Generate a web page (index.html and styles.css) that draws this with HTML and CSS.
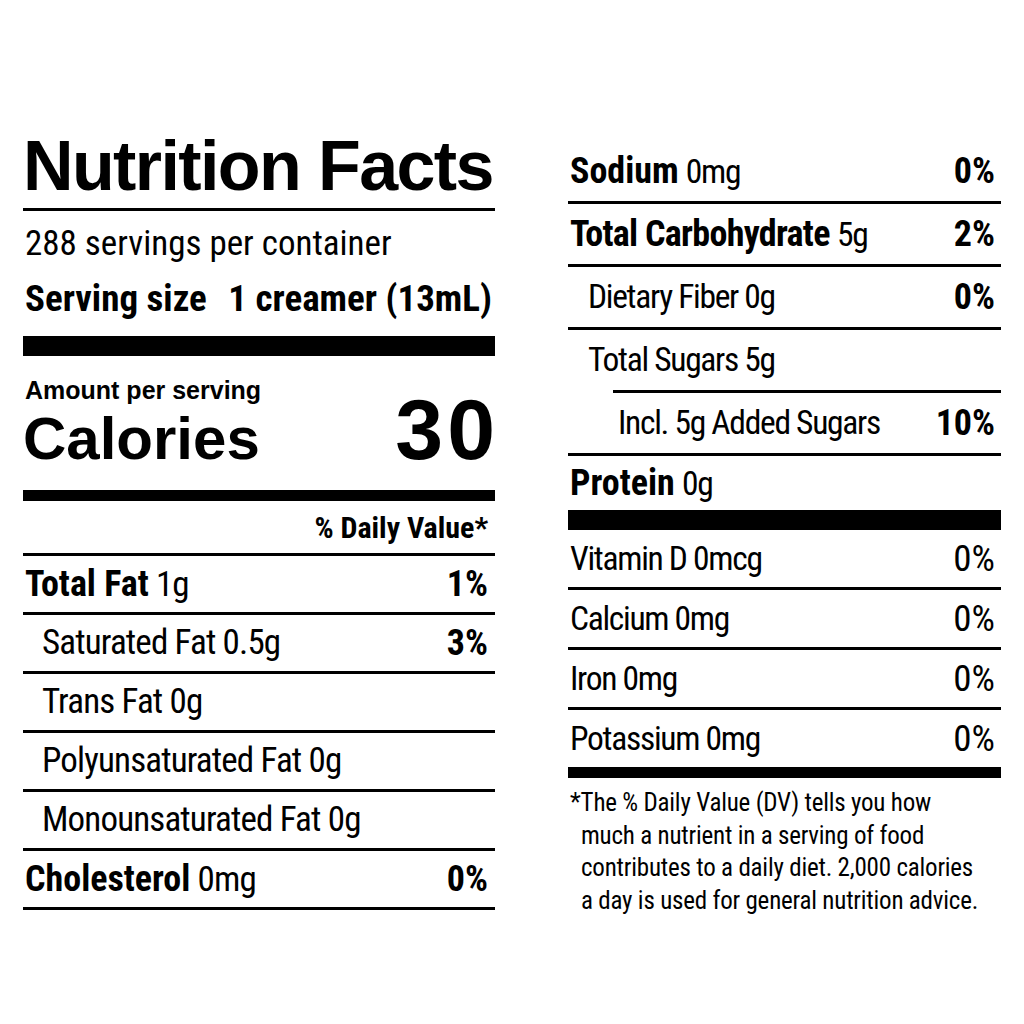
FILE: index.html
```html
<!DOCTYPE html>
<html lang="en">
<head>
<meta charset="utf-8">
<title>Nutrition Facts</title>
<link rel="stylesheet" href="styles.css">
</head>
<body>
<div class="label">
  <div class="col left">
    <h1 class="title">Nutrition Facts</h1>
    <div class="rule r-title"></div>
    <p class="servings">288 servings per container</p>
    <p class="size"><span>Serving size</span><span>1 creamer (13mL)</span></p>
    <div class="bar bar-lg"></div>
    <p class="amount">Amount per serving</p>
    <div class="cal-row"><span class="cal-label">Calories</span><span class="cal-value">30</span></div>
    <div class="bar bar-md"></div>
    <p class="dv-head">% Daily Value*</p>
    <div class="rule r-dv"></div>
    <div class="row"><span><b>Total Fat</b> 1g</span><b>1%</b></div>
    <div class="row indent"><span>Saturated Fat 0.5g</span><b>3%</b></div>
    <div class="row indent"><span>Trans Fat 0g</span></div>
    <div class="row indent"><span>Polyunsaturated Fat 0g</span></div>
    <div class="row indent"><span>Monounsaturated Fat 0g</span></div>
    <div class="row"><span><b>Cholesterol</b> 0mg</span><b>0%</b></div>
  </div>
  <div class="col right">
    <div class="row"><span><b>Sodium</b> <span class="lt">0mg</span></span><b>0%</b></div>
    <div class="row"><span><b class="tight">Total Carbohydrate</b> <span class="lt">5g</span></span><b>2%</b></div>
    <div class="row indent"><span class="lt">Dietary Fiber 0g</span><b>0%</b></div>
    <div class="row indent sugars"><span class="lt">Total Sugars 5g</span></div>
    <div class="subrule"></div>
    <div class="row added"><span class="lt">Incl. 5g Added Sugars</span><b>10%</b></div>
    <div class="row protein"><span><b>Protein</b> <span class="lt">0g</span></span></div>
    <div class="bar bar-lg bar-flush"></div>
    <div class="row vit"><span class="lt">Vitamin D 0mcg</span><span class="pct">0%</span></div>
    <div class="row vit"><span class="lt">Calcium 0mg</span><span class="pct">0%</span></div>
    <div class="row vit"><span class="lt">Iron 0mg</span><span class="pct">0%</span></div>
    <div class="row vit last"><span class="lt">Potassium 0mg</span><span class="pct">0%</span></div>
    <div class="bar bar-md bar-flush"></div>
    <p class="foot">*The % Daily Value (DV) tells you how<br>much a nutrient in a serving of food<br>contributes to a daily diet. 2,000 calories<br>a day is used for general nutrition advice.</p>
  </div>
</div>
</body>
</html>
```

FILE: styles.css
```css
* {
  box-sizing: border-box;
}

body {
  margin: 0;
  background: #ffffff;
  color: #000000;
  font-family: "Roboto Condensed", "Liberation Sans Narrow", "Noto Sans", sans-serif;
  font-stretch: condensed;
}

h1, p {
  margin: 0;
}

b {
  font-weight: 700;
}

.label {
  display: flex;
  gap: 73px;
  padding-left: 23px;
}

.left {
  width: 472px;
  padding-top: 131px;
}

.right {
  width: 433px;
  padding-top: 140.5px;
}

.rule {
  height: 3px;
  background: #000;
}

.bar {
  background: #000;
}

.bar-lg {
  height: 20px;
  margin-top: 16.5px;
}

.bar-md {
  height: 11px;
  margin-top: 26px;
}

.bar-flush {
  margin-top: 0;
}

.title {
  font-family: "Liberation Sans", Arial, sans-serif;
  font-stretch: normal;
  font-weight: 700;
  font-size: 70px;
  line-height: 70px;
  letter-spacing: -1.6px;
  white-space: nowrap;
}

.r-title {
  margin-top: 7px;
}

.servings {
  margin-top: 13px;
  font-size: 35px;
  line-height: 40px;
  padding-left: 2px;
  white-space: nowrap;
}

.size {
  margin-top: 13.5px;
  font-size: 37px;
  line-height: 42px;
  font-weight: 700;
  display: flex;
  justify-content: space-between;
  padding: 0 3px 0 2px;
  white-space: nowrap;
}

.amount {
  margin-top: 22px;
  font-family: "Liberation Sans", Arial, sans-serif;
  font-stretch: normal;
  font-weight: 700;
  font-size: 25px;
  line-height: 24px;
  padding-left: 2px;
  white-space: nowrap;
}

.cal-row {
  margin-top: 1.5px;
  display: flex;
  justify-content: space-between;
  align-items: baseline;
  font-family: "Liberation Sans", Arial, sans-serif;
  font-stretch: normal;
  font-weight: 700;
}

.cal-label {
  font-size: 60px;
  line-height: 50px;
}

.cal-value {
  font-size: 86px;
  line-height: 50px;
  letter-spacing: 4px;
  margin-right: -4px;
}

.dv-head {
  margin-top: 10.6px;
  font-size: 30px;
  line-height: 34px;
  font-weight: 700;
  text-align: right;
  padding-right: 7px;
  white-space: nowrap;
}

.r-dv {
  margin-top: 8.4px;
}

.row {
  display: flex;
  justify-content: space-between;
  height: 59px;
  overflow: hidden;
  font-size: 35px;
  letter-spacing: -0.85px;
  line-height: 56px;
  border-bottom: 3px solid #000;
  padding: 0 7px 0 2px;
  white-space: nowrap;
}

.row b {
  font-size: 36px;
  letter-spacing: 0;
}

.row b.tight {
  letter-spacing: -0.7px;
}

.left .row.indent {
  padding-left: 19px;
}

.right .row {
  height: 63px;
  line-height: 60px;
  padding: 0 6px 0 2px;
}

.right .row.indent {
  padding-left: 20px;
}

.right .row.sugars {
  height: 60px;
  border-bottom: none;
}

.subrule {
  height: 3px;
  margin-left: 45px;
  background: #000;
}

.right .row.added {
  padding-left: 50px;
}

.right .row.protein {
  height: 54px;
  line-height: 54px;
  border-bottom: none;
}

.right .row.vit {
  height: 60px;
  line-height: 57px;
}

.right .row.vit.last {
  height: 57px;
  border-bottom: none;
}

.lt {
  font-size: 33.5px;
  letter-spacing: -1.3px;
}

.pct {
  font-size: 37px;
  letter-spacing: 0;
}

.foot {
  margin-top: 9.7px;
  font-size: 25px;
  letter-spacing: -0.2px;
  line-height: 32.5px;
  padding-left: 13px;
  text-indent: -11px;
  white-space: nowrap;
}
```
